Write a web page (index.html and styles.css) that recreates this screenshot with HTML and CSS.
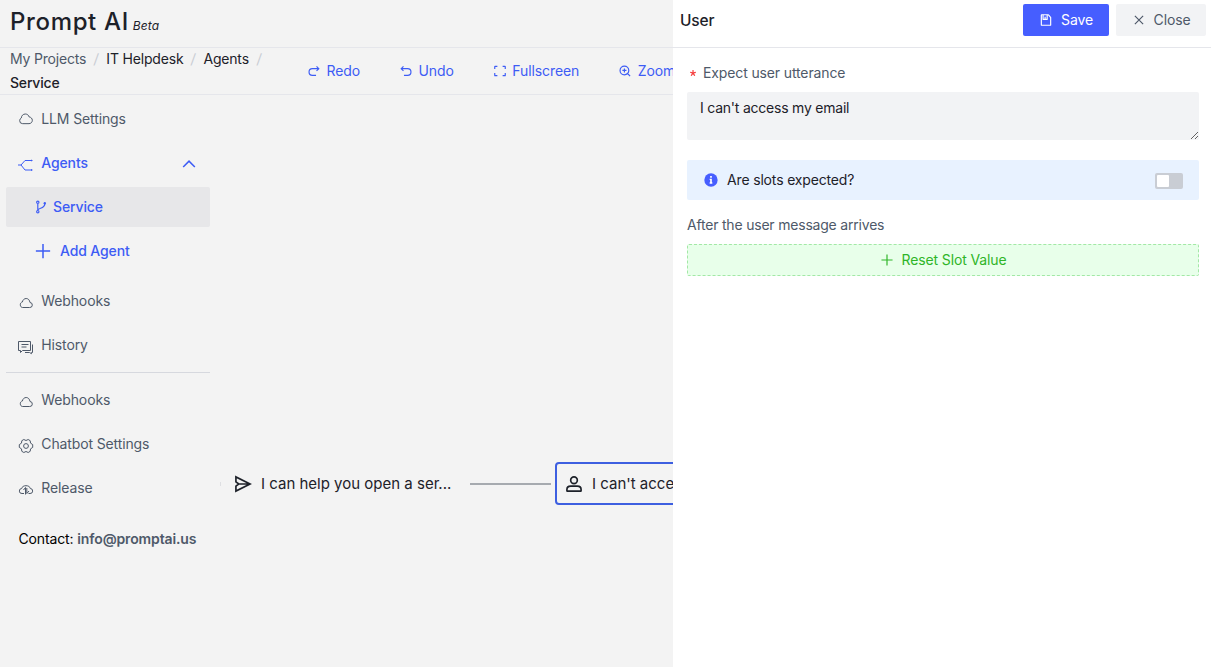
FILE: index.html
```
<!DOCTYPE html>
<html lang="en">
<head>
<meta charset="utf-8">
<title>Prompt AI</title>
<link rel="stylesheet" href="styles.css">
</head>
<body>
<div class="app">
  <header class="header"><h1 class="brand">Prompt AI</h1><em class="beta">Beta</em></header>
  <div class="subbar">
    <nav class="crumbs">
      <span class="crumb muted">My Projects</span><i class="sep">/</i><span class="crumb">IT Helpdesk</span><i class="sep">/</i><span class="crumb">Agents</span><i class="sep">/</i><span class="crumb current">Service</span>
    </nav>
    <div class="tools">
      <a class="tool"><svg class="icon" viewBox="0 0 48 48"><path d="m32.678 23.78 7.778-7.778-7.778-7.778M39.19 16H18.5C12.149 16 7 21.15 7 27.5S12.149 39 18.5 39H31"/></svg>Redo</a>
      <a class="tool"><svg class="icon" viewBox="0 0 48 48"><path d="m15.322 23.78-7.778-7.778 7.778-7.778M8.81 16H29.5C35.851 16 41 21.15 41 27.5S35.851 39 29.5 39H17"/></svg>Undo</a>
      <a class="tool"><svg class="icon" viewBox="0 0 48 48"><path d="M42 17V9a1 1 0 0 0-1-1h-8M6 17V9a1 1 0 0 1 1-1h8m27 23v8a1 1 0 0 1-1 1h-8M6 31v8a1 1 0 0 0 1 1h8"/></svg>Fullscreen</a>
      <a class="tool"><svg class="icon" viewBox="0 0 48 48"><path d="M32.607 32.607A14.953 14.953 0 0 0 37 22c0-8.284-6.716-15-15-15S7 13.716 7 22s6.716 15 15 15c4.142 0 7.892-1.679 10.607-4.393Zm0 0L41.5 41.5M29 22H15m7 7V15"/></svg>Zoom in</a>
    </div>
  </div>
  <div class="body">
    <aside class="sidebar">
      <a class="item"><svg class="icon thin cloud" viewBox="0 0 48 48"><path d="M5 29a9 9 0 0 0 9 9h19c5.523 0 10-4.477 10-10 0-5.312-4.142-9.657-9.373-9.98C32.3 12.833 27.598 9 22 9c-6.606 0-11.965 5.338-12 11.935A9 9 0 0 0 5 29Z"/></svg>LLM Settings</a>
      <a class="item active"><svg class="icon flow" viewBox="0 0 16 16"><path d="M0 8H3L7 3.500H14M3 8l4 5H14"/><path class="solid" d="M13 2.500 15 3.500 13 4.500ZM13 12l2 1-2 1Z"/></svg>Agents<svg class="icon chevron" viewBox="0 0 48 48"><path d="M39.600 34.557 24.043 19 8.487 34.557"/></svg></a>
      <a class="item sub active selected"><svg class="icon" viewBox="0 0 48 48"><path d="M17 8a4 4 0 1 1-8 0 4 4 0 0 1 8 0ZM17 40a4 4 0 1 1-8 0 4 4 0 0 1 8 0ZM13 12v24c0-10 24-5 24-22"/><circle class="solid" cx="37" cy="11" r="4"/></svg>Service</a>
      <a class="item add active"><svg class="icon" viewBox="0 0 48 48"><path d="M5 24h38M24 5v38"/></svg>Add Agent</a>
      <a class="item group"><svg class="icon small" viewBox="0 0 16 16"><path d="M4.600 12.500h7a2.500 2.500 0 0 0 .4-5C11.700 5.200 10.200 3.500 8.200 3.500S4.700 5 4.400 7C3 7.200 2.300 8.400 2.300 9.800c0 1.500 1 2.700 2.300 2.700Z"/></svg>Webhooks</a>
      <a class="item"><svg class="icon small chat" viewBox="0 0 16 16"><path d="M.5 2.500h12v9h-8l-2 2v-2h-2ZM3.500 5.500h7M3.500 8h5M14.500 5.500v8h-1v1.200l-2-1.200H7"/></svg>History</a>
      <div class="divider"></div>
      <a class="item"><svg class="icon small" viewBox="0 0 16 16"><path d="M4.600 12.500h7a2.500 2.500 0 0 0 .4-5C11.700 5.200 10.200 3.500 8.200 3.500S4.700 5 4.400 7C3 7.200 2.300 8.400 2.300 9.800c0 1.500 1 2.700 2.300 2.700Z"/></svg>Webhooks</a>
      <a class="item"><svg class="icon small" viewBox="0 0 16 16"><path d="m5.800 1.500 2.200 1 2.200-1 2 1.200.3 2.400 2.200 1.500v2.800l-2.200 1.500-.3 2.400-2 1.200-2.200-1-2.200 1-2-1.200-.3-2.400-2.200-1.500V6.600l2.200-1.500.3-2.400Z"/><circle cx="8" cy="8" r="2.400"/></svg>Chatbot Settings</a>
      <a class="item"><svg class="icon small release" viewBox="0 0 16 16"><path d="M6 11.500H4a2.500 2.500 0 0 1-.3-5C4 4.700 5.700 3.700 8 3.700s4 1 4.300 2.800a2.500 2.500 0 0 1-.3 5h-1.500M7.500 12.500V5.500L5.500 8M8.800 6v5.500L11 9"/></svg>Release</a>
      <p class="contact">Contact: <b>info@promptai.us</b></p>
    </aside>
    <main class="canvas">
      <span class="port"></span>
      <div class="node"><svg class="icon node-icon" viewBox="0 0 48 48"><path d="m14 24-7-5V7l34 17L7 41V29l7-5Zm0 0h25"/></svg>I can help you open a ser...</div>
      <span class="edge"></span>
      <div class="node framed"><svg class="icon node-icon" viewBox="0 0 48 48"><path d="M7 37c0-4.970 4.030-8 9-8h16c4.970 0 9 3.030 9 8v3a1 1 0 0 1-1 1H8a1 1 0 0 1-1-1Z"/><circle cx="24" cy="15" r="8"/></svg>I can't access my email</div>
    </main>
  </div>
  <section class="drawer">
    <div class="drawer-head">
      <h2 class="drawer-title">User</h2>
      <button class="btn primary"><svg class="icon" viewBox="0 0 48 48"><path d="M21 13v9m18 20H9a1 1 0 0 1-1-1V7a1 1 0 0 1 1-1h22.550a1 1 0 0 1 .748.336l7.450 8.380a1 1 0 0 1 .252.664V41a1 1 0 0 1-1 1ZM14 6h14v15a1 1 0 0 1-1 1H15a1 1 0 0 1-1-1V6Z"/></svg>Save</button>
      <button class="btn"><svg class="icon" viewBox="0 0 48 48"><path d="m9.857 9.858 28.285 28.284M38.142 9.858 9.857 38.142"/></svg>Close</button>
    </div>
    <div class="form">
      <label class="label"><svg class="star" viewBox="0 0 1024 1024"><path d="M583.338667 17.066667c18.773333 0 34.133333 15.360 34.133333 34.133333v349.013333l313.344-101.888a34.133 34.133 0 0 1 43.008 22.016l42.154667 129.706667a34.133 34.133 0 0 1-21.845334 43.178667l-315.733333 102.400 208.896 287.744a34.133 34.133 0 0 1-7.509333 47.786666l-110.421334 80.213334a34.133 34.133 0 0 1-47.786666-7.509334L505.685333 706.218667 288.426667 1003.861333a34.133 34.133 0 0 1-47.786667 7.509334l-110.421333-80.213334a34.133 34.133 0 0 1-7.509334-47.786666l214.186667-295.253334L29.013333 489.813333a34.133 34.133 0 0 1-22.016-43.008l42.154667-129.877333a34.133 34.133 0 0 1 43.008-22.016l320.512 104.106667L412.672 51.200c0-18.773 15.360-34.133 34.133-34.133h136.533Z"/></svg>Expect user utterance</label>
      <textarea class="field">I can't access my email</textarea>
      <div class="notice">
        <svg class="info" viewBox="0 0 48 48"><circle class="info-bg" cx="24" cy="24" r="20"/><path class="info-mark" d="M21.500 12h5v5h-5zM20 20h6.500v11h1.500v4h-8v-4h1.500v-7H20z"/></svg>
        <span class="notice-text">Are slots expected?</span>
        <span class="switch"><span class="knob"></span></span>
      </div>
      <p class="caption">After the user message arrives</p>
      <button class="dashed"><svg class="icon" viewBox="0 0 48 48"><path d="M5 24h38M24 5v38"/></svg>Reset Slot Value</button>
    </div>
  </section>
</div>
</body>
</html>
```
FILE: styles.css
```
* { box-sizing: border-box; }
body { margin: 0; font: 14px/22px Inter, "Liberation Sans", sans-serif; color: #1d2129; letter-spacing: -.13px; }
.app { position: relative; width: 1211px; height: 667px; overflow: hidden; background: #f3f3f3; display: flex; flex-direction: column; }
.icon { width: 14px; height: 14px; flex: none; fill: none; stroke: currentColor; stroke-width: 4; }
.header { height: 48px; flex: none; border-bottom: 1px solid #e5e6eb; padding: 4px 10px 0; display: flex; align-items: baseline; gap: 4px; }
.brand { margin: 0; font-size: 24px; line-height: 36px; font-weight: 500; letter-spacing: .65px; }
.beta { font-size: 12px; letter-spacing: .1px; }
.subbar { height: 47px; flex: none; display: flex; border-bottom: 1px solid #e5e6eb; }
.crumbs { width: 290px; margin-top: -1px; padding-left: 10px; display: flex; flex-wrap: wrap; align-content: flex-start; line-height: 24px; letter-spacing: -.18px; }
.crumb { white-space: nowrap; }
.current { font-weight: 500; }
.muted { color: #4e5969; }
.sep { width: 20px; text-align: center; font-style: normal; color: #c9cdd4; transform: skewX(-5deg); }
.tools { display: flex; align-items: center; gap: 39px; padding-left: 17px; color: #3d5cf5; letter-spacing: -.1px; }
.tool { display: flex; align-items: center; gap: 5.500px; white-space: nowrap; }
.body { display: flex; flex: 1; }
.sidebar { width: 216px; flex: none; padding: 4px 6px; display: flex; flex-direction: column; gap: 4px; color: #4e5969; }
.item { height: 40px; display: flex; align-items: center; padding: 0 12px; gap: 7.300px; border-radius: 2px; }
.item .icon { width: 16px; height: 16px; }
.item .thin { stroke-width: 3; }
.item .small, .item .flow { stroke-width: 1; margin-top: 3px; }
.active { color: #3d5cf5; font-weight: 500; }
.item .chevron { width: 18px; height: 18px; margin-left: auto; }
.item.sub { padding-left: 28px; gap: 5px; }
.item.sub .icon { width: 14px; height: 14px; }
.selected { background: #e7e7e9; }
.item .solid { fill: currentColor; stroke: none; }
.item.add { padding-left: 28px; gap: 8px; }
.item.add .icon { width: 18px; height: 18px; }
.group { margin-top: 6px; }
.divider { height: 1px; background: #d6d8de; margin: 3px 0; }
.contact { margin: 16px 0 0 12.500px; color: #000; white-space: nowrap; }
.contact b { font-weight: 600; color: #4e5969; }
.canvas { flex: 1; display: flex; align-items: center; padding: 205px 0 0 4px; letter-spacing: 0; }
.port { width: 1px; height: 4px; background: #dedfe2; }
.node { height: 43px; display: flex; align-items: center; gap: 8px; padding-left: 12px; width: 249px; flex: none; font-size: 15px; white-space: nowrap; }
.node-icon { width: 20px; height: 20px; }
.edge { width: 81px; height: 2px; background: #a6aaaf; flex: none; margin-right: 4px; }
.framed { border: 2px solid #3d5fe0; border-radius: 4px; padding-left: 7px; }
.drawer { position: absolute; top: 0; right: 0; bottom: 0; width: 538px; background: #fff; }
.drawer-head { height: 48px; border-bottom: 1px solid #e5e6eb; padding: 4px 5px 0 7px; display: flex; align-items: flex-start; gap: 7px; }
.drawer-title { margin: 0 auto 0 0; font-size: 15.500px; line-height: 33px; font-weight: 500; }
.btn { width: 90px; height: 32px; border: 0; border-radius: 2px; background: #f2f3f5; color: #4e5969; font: inherit; letter-spacing: inherit; display: flex; align-items: center; justify-content: center; gap: 8px; padding: 0; }
.primary { width: 86px; background: #465eff; color: #fff; }
.form { padding: 14px 12px 0 14px; display: flex; flex-direction: column; }
.label { color: #4e5969; display: flex; align-items: center; gap: 7px; padding-left: 3px; }
.star { width: 6px; height: 6px; fill: #f53f3f; }
.field { height: 48px; margin-top: 8px; padding: 5px 13px; border: 0; border-radius: 2px; background: #f2f3f5; color: #1d2129; font: inherit; letter-spacing: -.22px; resize: vertical; overflow: hidden; }
.notice { height: 40px; margin-top: 20px; padding: 0 16px; display: flex; align-items: center; background: #e8f2ff; border-radius: 2px; }
.info { width: 16px; height: 16px; margin-right: 8px; }
.info-bg { fill: #465eff; }
.info-mark { fill: #fff; }
.notice-text { margin-right: auto; letter-spacing: -.16px; }
.switch { width: 28px; height: 16px; background: #c9cdd4; border-radius: 2px; padding: 2px; margin-top: 2px; }
.knob { display: block; width: 12px; height: 12px; background: #fff; border-radius: 1px; }
.caption { margin: 14px 0 8px; color: #4e5969; letter-spacing: -.2px; }
.dashed { height: 32px; border: 1px dashed #a3e8a6; border-radius: 2px; background: #e8ffea; color: #2fb528; font: inherit; letter-spacing: inherit; display: flex; align-items: center; justify-content: center; gap: 8px; padding: 0; }
```
